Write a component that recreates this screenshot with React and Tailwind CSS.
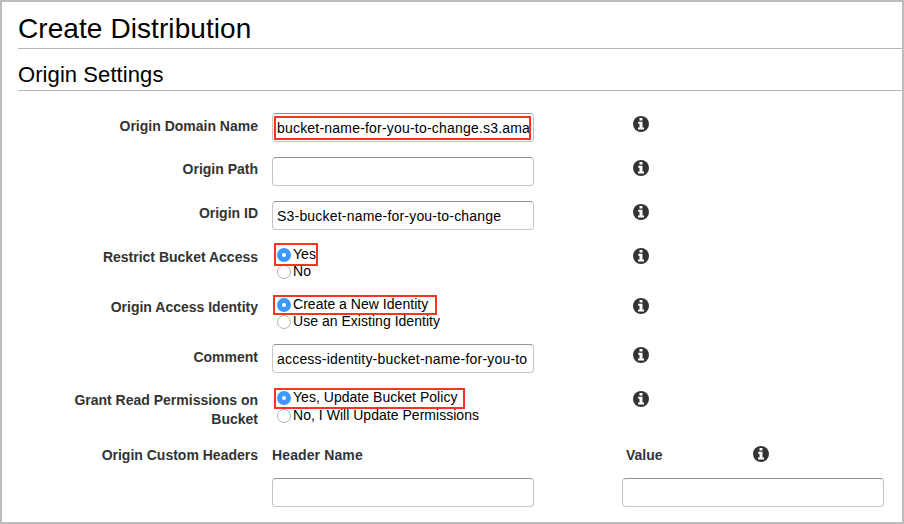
import React from "react";

function InfoIcon() {
  return (
    <svg viewBox="0 0 16 16" className="block h-4 w-4 shrink-0">
      <circle cx="8" cy="8" r="8" fill="#333" />
      <path d="M6.5 2h3v2.4h-3zM5.2 5.8h4.3v5.7H11v1.9H5v-1.9h1.5V7.7H5.2z" fill="#fff" />
    </svg>
  );
}

function Row({ label, height, labelPad = "pt-[3px]", children }) {
  return (
    <div className={`flex items-start ${height}`}>
      <div
        className={`w-[185px] shrink-0 translate-x-px text-right text-[14px] leading-[19px] font-bold text-[#333] ${labelPad}`}
      >
        {label}
      </div>
      <div className="relative ml-[15px] w-[262px] shrink-0">{children}</div>
      <div className="ml-[99px] pt-[3px]">
        <InfoIcon />
      </div>
    </div>
  );
}

function Field({ children }) {
  return (
    <div className="flex h-[29px] w-[262px] items-center overflow-hidden rounded-[4px] border border-[#c6c6c6] border-t-[#949494] bg-white pt-px pl-1 text-[14px] tracking-[0.2px] whitespace-nowrap">
      {children}
    </div>
  );
}

function Radio({ checked, children }) {
  return (
    <div className="flex h-[17px] items-center gap-[2px] pl-[5px] text-[14px] leading-[17px] tracking-[0.03px] whitespace-nowrap">
      {checked ? (
        <span className="mt-px flex h-[14px] w-[14px] items-center justify-center rounded-full bg-[#3b99fc]">
          <span className="h-1 w-1 rounded-full bg-white" />
        </span>
      ) : (
        <span className="h-[14px] w-[14px] rounded-full border border-[#b5b5b5] bg-white" />
      )}
      <span className="-mt-px">{children}</span>
    </div>
  );
}

const mark = "pointer-events-none absolute border-2 border-[#fb3323]";

export default function App() {
  return (
    <div className="h-[524px] w-[904px] overflow-hidden border-2 border-[#bdbdbd] bg-white pl-4 font-['Liberation_Sans',Arial,sans-serif] text-black">
      <h1 className="h-[47px] border-b border-[#b5b5b5] pt-[10px] text-[28px] leading-[34px] tracking-[0.08px]">
        Create Distribution
      </h1>
      <h2 className="h-[42px] border-b border-[#b5b5b5] pt-[12px] text-[22px] leading-[27px] tracking-[0.08px]">
        Origin Settings
      </h2>
      <div className="pt-[22px] pl-[54px]">
        <Row label="Origin Domain Name" height="h-[44px]" labelPad="pt-[4px]">
          <Field>bucket-name-for-you-to-change.s3.ama</Field>
          <div className={`${mark} top-[3px] left-[2px] h-[24px] w-[257px]`} />
        </Row>
        <Row label="Origin Path" height="h-[44px]">
          <Field />
        </Row>
        <Row label="Origin ID" height="h-[44px]">
          <Field>S3-bucket-name-for-you-to-change</Field>
        </Row>
        <Row label="Restrict Bucket Access" height="h-[50px]">
          <div className="pt-[1px]">
            <Radio checked>Yes</Radio>
            <Radio>No</Radio>
          </div>
          <div className={`${mark} top-[-2px] left-[2px] h-[23px] w-[44px]`} />
        </Row>
        <Row label="Origin Access Identity" height="h-[49px]">
          <div className="pt-[1px]">
            <Radio checked>Create a New Identity</Radio>
            <Radio>Use an Existing Identity</Radio>
          </div>
          <div className={`${mark} top-0 left-[1px] h-[20px] w-[164px]`} />
        </Row>
        <Row label="Comment" height="h-[44px]" labelPad="pt-[4px]">
          <Field>access-identity-bucket-name-for-you-to</Field>
        </Row>
        <Row label="Grant Read Permissions on Bucket" height="h-[55px]">
          <div className="flex flex-col gap-px pt-[1px]">
            <Radio checked>Yes, Update Bucket Policy</Radio>
            <Radio>No, I Will Update Permissions</Radio>
          </div>
          <div className={`${mark} top-0 left-[2px] h-[21px] w-[191px]`} />
        </Row>
        <div className="flex h-[35px] items-start pt-[3px] text-[14px] leading-[19px] font-bold text-[#333]">
          <div className="w-[185px] translate-x-px text-right">Origin Custom Headers</div>
          <div className="ml-[15px] w-[354px] tracking-[0.12px]">Header Name</div>
          <div className="w-[127px]">Value</div>
          <InfoIcon />
        </div>
        <div className="flex gap-[88px] pl-[200px]">
          <Field />
          <Field />
        </div>
      </div>
    </div>
  );
}
